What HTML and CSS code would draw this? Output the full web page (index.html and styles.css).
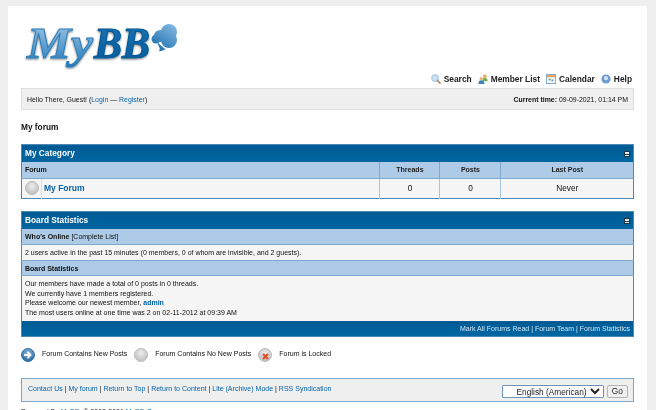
FILE: index.html
```html
<!DOCTYPE html>
<html lang="en">
<head>
<meta charset="utf-8">
<title>My forum</title>
<link rel="stylesheet" href="styles.css">
</head>
<body>
<div class="page">
  <header class="brand">
    <a class="logo" href="#">
      <svg width="162" height="56" viewBox="0 0 162 56">
        <defs>
          <linearGradient id="my" x1="0" y1="0" x2="0" y2="1"><stop offset="0" stop-color="#a9cde9"/><stop offset="0.55" stop-color="#5f9fd0"/><stop offset="1" stop-color="#2475b3"/></linearGradient>
          <linearGradient id="bb" x1="0" y1="0" x2="0" y2="1"><stop offset="0" stop-color="#1f73b5"/><stop offset="1" stop-color="#045a97"/></linearGradient>
          <linearGradient id="cl" gradientUnits="userSpaceOnUse" x1="152" y1="12" x2="136" y2="36"><stop offset="0" stop-color="#7db6e0"/><stop offset="1" stop-color="#1f6fae"/></linearGradient>
          <filter id="sh" x="-10%" y="-10%" width="120%" height="130%"><feGaussianBlur in="SourceAlpha" stdDeviation="0.9"/><feOffset dy="1"/><feComponentTransfer><feFuncA type="linear" slope="0.5"/></feComponentTransfer><feMerge><feMergeNode/><feMergeNode in="SourceGraphic"/></feMerge></filter>
        </defs>
        <g filter="url(#sh)">
          <text class="logo-text" x="6" y="44" textLength="66" lengthAdjust="spacingAndGlyphs" fill="url(#my)" stroke="#2f7fba" stroke-width="1">My</text>
          <text class="logo-text" x="73" y="44" textLength="56" lengthAdjust="spacingAndGlyphs" fill="url(#bb)" stroke="#045a97" stroke-width="1.200">BB</text>
        </g>
        <g fill="url(#cl)">
          <circle cx="148" cy="18" r="8"/>
          <circle cx="139" cy="22" r="6"/>
          <circle cx="148" cy="26" r="8"/>
          <circle cx="135" cy="25" r="4.500"/>
          <path d="M136 28l8 7 0 -1c2 1 -2 3 -6 3 1-2 1-3 0-4z"/>
        </g>
      </svg>
    </a>
    <nav class="menu">
      <a class="menu-item" href="#">
        <svg class="ico" viewBox="0 0 11 11"><circle cx="4.500" cy="4.500" r="3.800" fill="#c9e0f5" stroke="#8fb0cf" stroke-width="0.800"/><path d="M7 7l3 3" stroke="#b5896a" stroke-width="1.800" stroke-linecap="round"/></svg>Search</a>
      <a class="menu-item" href="#">
        <svg class="ico" viewBox="0 0 11 11"><circle cx="7.500" cy="2.500" r="2" fill="#e6a95c"/><path d="M5 8c0-3 1-4 2.500-4s3 1 3 3v1z" fill="#6fae4c"/><circle cx="3.500" cy="5" r="1.800" fill="#e8b078"/><path d="M0.500 11c0-3 1-4 3-4s3.500 1 3.500 4z" fill="#3f7fc0"/></svg>Member List</a>
      <a class="menu-item" href="#">
        <svg class="ico" viewBox="0 0 11 11"><rect x="0.500" y="0.500" width="10" height="10" fill="#f4f7fa" stroke="#7ba6cc"/><rect x="1" y="1" width="9" height="2.500" fill="#e8a05c"/><rect x="3" y="5" width="2" height="2" fill="#6fae4c"/><rect x="6" y="6" width="2" height="2" fill="#5a9ad0"/></svg>Calendar</a>
      <a class="menu-item" href="#">
        <svg class="ico" viewBox="0 0 11 11"><circle cx="5.500" cy="5.500" r="5" fill="#6d9bd0"/><circle cx="5.500" cy="4.500" r="2.400" fill="#cfe0f2"/><path d="M5.500 8.500v.6" stroke="#e5eef8"/></svg>Help</a>
    </nav>
  </header>

  <div class="welcome">
    <span>Hello There, Guest! (<a href="#">Login</a> — <a href="#">Register</a>)</span>
    <span><b>Current time:</b> 09-09-2021, 01:14 PM</span>
  </div>

  <h1 class="crumb">My forum</h1>

  <table class="tbl cat">
    <colgroup><col class="c-i"><col><col class="c-t"><col class="c-p"><col class="c-l"></colgroup>
    <thead>
      <tr><th class="thead" colspan="5"><div class="thead-in"><span>My Category</span><span class="collapse"></span></div></th></tr>
      <tr class="tcat"><td colspan="2">Forum</td><td class="ctr">Threads</td><td class="ctr">Posts</td><td class="ctr">Last Post</td></tr>
    </thead>
    <tbody>
      <tr class="forum">
        <td class="forum-icon"><span class="bulb off"></span></td>
        <td class="forum-name"><a href="#">My Forum</a></td>
        <td class="ctr">0</td><td class="ctr">0</td><td class="ctr">Never</td>
      </tr>
    </tbody>
  </table>

  <table class="tbl stats">
    <thead>
      <tr><th class="thead"><div class="thead-in"><span>Board Statistics</span><span class="collapse"></span></div></th></tr>
    </thead>
    <tbody>
      <tr class="tsub"><td><b>Who's Online</b> [Complete List]</td></tr>
      <tr class="row"><td>2 users active in the past 15 minutes (0 members, 0 of whom are invisible, and 2 guests).</td></tr>
      <tr class="tsub tsub-b"><td><b>Board Statistics</b></td></tr>
      <tr class="row lines"><td>Our members have made a total of 0 posts in 0 threads.<br>We currently have 1 members registered.<br>Please welcome our newest member, <a href="#">admin</a><br>The most users online at one time was 2 on 02-11-2012 at 09:39 AM</td></tr>
      <tr class="tfoot"><td><a href="#">Mark All Forums Read</a> | <a href="#">Forum Team</a> | <a href="#">Forum Statistics</a></td></tr>
    </tbody>
  </table>

  <div class="legend">
    <span class="bulb on"><svg viewBox="0 0 14 14"><path d="M3 7h6M6.500 4l3 3-3 3" fill="none" stroke="#fff" stroke-width="1.800"/></svg></span><span>Forum Contains New Posts</span>
    <span class="bulb off"></span><span>Forum Contains No New Posts</span>
    <span class="bulb off"><svg viewBox="0 0 14 14"><path d="M5 6l5 5M10 6l-5 5" stroke="#e0502a" stroke-width="2.200"/></svg></span><span>Forum is Locked</span>
  </div>

  <footer class="links">
    <div class="link-list"><a href="#">Contact Us</a> | <a href="#">My forum</a> | <a href="#">Return to Top</a> | <a href="#">Return to Content</a> | <a href="#">Lite (Archive) Mode</a> | <a href="#">RSS Syndication</a></div>
    <form class="lang">
      <select><option>English (American)</option></select>
      <button type="button">Go</button>
    </form>
  </footer>
  <p class="powered">Powered By <a href="#">MyBB</a>, © 2002-2021 <a href="#">MyBB Group</a>.</p>
</div>
</body>
</html>
```
FILE: styles.css
```css
* { box-sizing: border-box; }
html, body { margin: 0; height: 410px; overflow: hidden; }
body {
  background: #efefef;
  font-family: "Liberation Sans", Arial, sans-serif;
  font-size: 7px;
  color: #111;
  padding: 6px 9px 0 8px;
}
a { color: #0563a8; text-decoration: none; }
.page { background: #fff; padding: 0 13px; height: 500px; filter: blur(0.22px); }

.brand { height: 82px; padding-top: 8px; }
.logo { display: block; width: 162px; height: 56px; }
.logo svg { display: block; }
.logo-text { font-family: "Liberation Serif", serif; font-weight: bold; font-style: italic; font-size: 45px; }
.menu { display: flex; justify-content: flex-end; align-items: center; gap: 6px; height: 16px; margin-top: 1px; padding-right: 2px; }
.menu-item { display: flex; align-items: center; gap: 3px; font-size: 8.400px; font-weight: bold; color: #222; }
.ico { width: 10px; height: 10px; display: block; }

.welcome { display: flex; justify-content: space-between; align-items: center; height: 22px; background: #efefef; border: 1px solid #dfdfdf; padding: 0 5px; font-size: 6.950px; }

.crumb { margin: 12px 0; font-size: 8.300px; line-height: 10px; font-weight: bold; color: #111; }

.tbl { width: 100%; border-collapse: collapse; table-layout: fixed; border: 1px solid #4d87b6; background: #fff; margin-bottom: 12px; }
.tbl td, .tbl th { padding: 0 3px; }
.cat { height: 55px; }
.c-i { width: 20px; }
.c-t { width: 60px; }
.c-p { width: 61px; }
.c-l { width: 132.500px; }
.thead { height: 17.500px; background: linear-gradient(#005a93, #0066a2); color: #fff; font-size: 8.300px; font-weight: bold; text-align: left; border: 0; }
.cat .thead-in { padding-bottom: 1px; }
.thead-in { display: flex; justify-content: space-between; align-items: center; }
.collapse { width: 6px; height: 6px; background: #e8edf2; border: 1px solid #234; display: flex; align-items: center; margin-top: 2px; }
.collapse::before { content: ""; display: block; width: 4px; height: 1px; background: #234; }
.tcat td { height: 16px; background: #adcbe7; font-weight: bold; color: #111; border-bottom: 1px solid #81a8cc; border-left: 1px solid #81a8cc; }
.tcat td:first-child { border-left: 0; }
.tcat .ctr { text-align: center; color: #222; }
.forum td { height: 20px; background: #f5f5f5; font-size: 8.300px; text-align: center; border-left: 1px solid #a9c6e0; }
.tbl .forum-icon { border-left: 0; padding: 0 0 0 3px; text-align: left; }
.tbl .forum-icon .bulb { display: block; }
.tbl .forum-name { text-align: left; border-left: 1px solid #d6e4f1; padding: 0 0 1px 2px; }
.forum-name a { font-weight: bold; font-size: 8.500px; }

.bulb { display: inline-block; flex: none; width: 14px; height: 14px; border-radius: 50%; background: radial-gradient(circle at 50% 35%, #eee, #c4c4c4 70%); border: 1px solid #bbb; position: relative; }
.bulb svg { display: block; position: absolute; left: -1px; top: -1px; width: 14px; height: 14px; }
.bulb.on { background: radial-gradient(circle at 50% 30%, #8db5da, #2e6fa8 80%); border-color: #2e6fa8; }

.stats { margin-bottom: 10px; }
.stats .thead { height: 17px; }
.tsub td { height: 16px; background: #adcbe7; border-bottom: 1px solid #81a8cc; color: #111; }
.tsub-b td { height: 15px; }
.row td { height: 16px; background: #f5f5f5; border-bottom: 1px solid #81a8cc; }
.lines td { height: 45px; line-height: 9.700px; border-bottom: 0; }
.lines a { font-weight: bold; }
.tfoot td { height: 16px; background: linear-gradient(#005a93, #0066a2); color: #d4e4f2; text-align: right; }
.tfoot a { color: #d4e4f2; }

.legend { display: flex; align-items: center; gap: 7px; height: 16px; margin-bottom: 15px; }
.legend > span:nth-child(even) { margin-top: -3px; }

.links { display: flex; justify-content: space-between; align-items: center; height: 24px; background: #efefef; border: 1px solid #7ba6cc; padding: 0 5px 0 6px; }
.link-list { margin-top: -3px; font-size: 7.030px; }
.lang { display: flex; gap: 2.500px; align-items: center; margin-top: 2px; }
.lang select { width: 102.500px; height: 13px; padding: 0 0 0 10px; font: 8.300px/11px "Liberation Sans", Arial, sans-serif; background: #fff; border: 1px solid #6f93b8; color: #222; border-radius: 1px; }
.lang button { width: 21.500px; height: 13px; padding: 0; font: 8.300px "Liberation Sans", Arial, sans-serif; color: #222; background: #efefef; border: 1px solid #b5b5b5; border-radius: 2px; }

.powered { margin: 5px 0 0; line-height: 9px; color: #222; }
```
